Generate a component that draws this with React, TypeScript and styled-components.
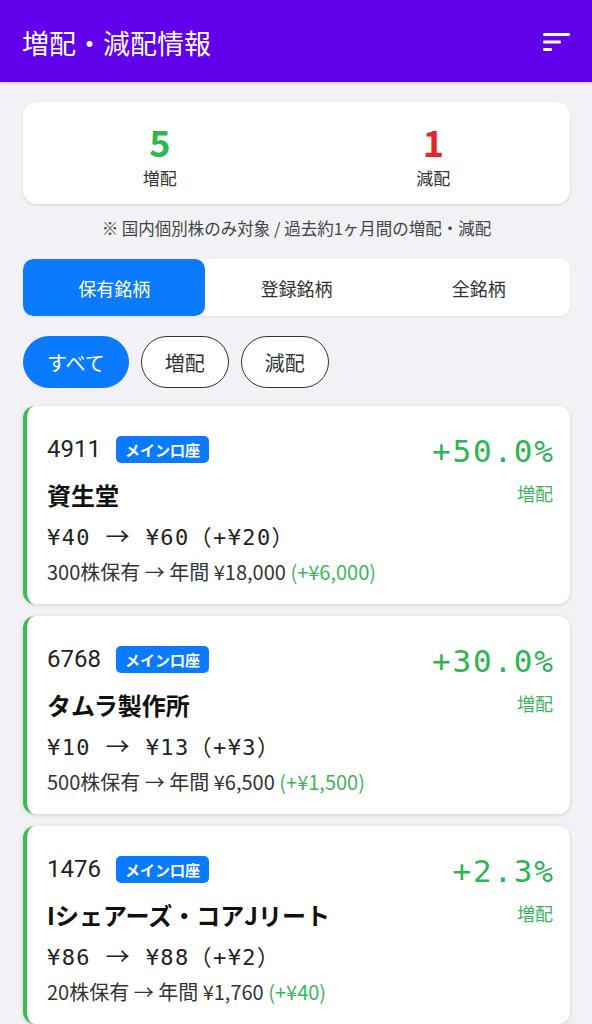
import React from "react";
import styled, { createGlobalStyle } from "styled-components";

const CJK = `"Noto Sans CJK JP", "Noto Sans", sans-serif`;
const MONO = `"DejaVu Sans Mono", "Noto Sans CJK JP", monospace`;
const LATIN = `Roboto, "Noto Sans CJK JP", sans-serif`;

const GlobalStyle = createGlobalStyle`
  html, body { margin: 0; padding: 0; }
  body {
    background: #f2f2f6;
    font-family: ${CJK};
    color: #222;
  }
  * { box-sizing: border-box; }
`;

const Page = styled.div`
  width: 592px;
  min-height: 1024px;
  background: #f2f2f6;
  overflow: hidden;
`;

const Header = styled.header`
  height: 82px;
  background: #6100ea;
  display: flex;
  align-items: center;
  justify-content: space-between;
  padding: 0 20px 0 22px;
  box-shadow: 0 1px 3px rgba(0, 0, 0, 0.2);
`;

const Title = styled.h1`
  margin: 0;
  color: #fff;
  font-size: 27px;
  font-weight: 400;
  line-height: 36px;
  padding-top: 4px;
`;

const IconButton = styled.div`
  width: 30px;
  height: 30px;
  display: flex;
  align-items: center;
  justify-content: center;
  padding-top: 4px;
`;

const Content = styled.main`
  padding: 20px 22px 0 23px;
  display: flex;
  flex-direction: column;
`;

const SummaryCard = styled.section`
  background: #fff;
  border-radius: 14px;
  height: 102px;
  display: grid;
  grid-template-columns: 1fr 1fr;
  box-shadow: 0 1px 3px rgba(0, 0, 0, 0.12);
`;

const Stat = styled.div`
  display: flex;
  flex-direction: column;
  align-items: center;
  justify-content: center;
  padding-top: 4px;
`;

const StatNumber = styled.div<{ $color: string }>`
  font-size: 36px;
  font-weight: 700;
  line-height: 40px;
  color: ${(p) => p.$color};
`;

const StatLabel = styled.div`
  font-size: 17px;
  color: #333;
  line-height: 22px;
  margin-top: 6px;
`;

const Note = styled.p`
  margin: 14px 0 0;
  text-align: center;
  font-size: 16.5px;
  color: #444;
  line-height: 20px;
`;

const Tabs = styled.div`
  margin-top: 21px;
  height: 57px;
  background: #fff;
  border-radius: 10px;
  display: grid;
  grid-template-columns: repeat(3, 1fr);
  box-shadow: 0 1px 2px rgba(0, 0, 0, 0.08);
  overflow: hidden;
`;

const Tab = styled.div<{ $active?: boolean }>`
  display: flex;
  align-items: center;
  justify-content: center;
  font-size: 18px;
  color: ${(p) => (p.$active ? "#fff" : "#333")};
  background: ${(p) => (p.$active ? "#0a7bff" : "transparent")};
  border-radius: 10px;
`;

const Chips = styled.div`
  margin-top: 20px;
  display: flex;
  gap: 12px;
`;

const Chip = styled.div<{ $active?: boolean }>`
  height: 52px;
  padding: 0 23px;
  border-radius: 26px;
  display: flex;
  align-items: center;
  font-size: 20px;
  color: ${(p) => (p.$active ? "#fff" : "#333")};
  background: ${(p) => (p.$active ? "#0a7bff" : "#fff")};
  border: 1.5px solid ${(p) => (p.$active ? "#0a7bff" : "#333")};
`;

const List = styled.div`
  margin-top: 18px;
  display: flex;
  flex-direction: column;
  gap: 12px;
`;

const Card = styled.article<{ $accent: string }>`
  background: #fff;
  border-radius: 12px;
  border-left: 4px solid ${(p) => p.$accent};
  height: 198px;
  padding: 27px 17px 0 20px;
  display: flex;
  justify-content: space-between;
  box-shadow: 0 1px 4px rgba(0, 0, 0, 0.14);
`;

const Left = styled.div`
  display: flex;
  flex-direction: column;
`;

const CodeRow = styled.div`
  display: flex;
  align-items: center;
  gap: 15px;
  height: 32px;
`;

const Code = styled.span`
  font-family: ${LATIN};
  font-size: 24px;
  color: #222;
`;

const Badge = styled.span`
  background: #0a7bff;
  color: #fff;
  font-size: 15px;
  font-weight: 700;
  height: 27px;
  padding: 0 9px;
  border-radius: 5px;
  display: flex;
  align-items: center;
`;

const Name = styled.div`
  font-size: 24px;
  font-weight: 700;
  color: #111;
  line-height: 30px;
  margin-top: 15px;
`;

const Price = styled.div`
  font-family: ${MONO};
  font-size: 22px;
  letter-spacing: 1.4px;
  color: #222;
  line-height: 28px;
  margin-top: 11px;
  white-space: pre;
`;

const Arrow = styled.span`
  font-family: ${CJK};
  font-size: 24px;
`;

const Holding = styled.div`
  font-size: 20px;
  color: #333;
  line-height: 24px;
  margin-top: 8px;
  white-space: nowrap;
`;

const Gain = styled.span`
  color: #3cb55a;
`;

const Right = styled.div`
  display: flex;
  flex-direction: column;
  align-items: flex-end;
`;

const Percent = styled.div<{ $color: string }>`
  font-family: ${MONO};
  font-size: 31px;
  letter-spacing: 1.8px;
  margin-right: -1.8px;
  color: ${(p) => p.$color};
  line-height: 36px;
`;

const Kind = styled.div<{ $color: string }>`
  font-size: 18px;
  color: ${(p) => p.$color};
  line-height: 24px;
  margin-top: 12px;
`;

const SortIcon = () => (
  <svg width="28" height="20" viewBox="0 0 28 20">
    <rect x="0" y="0" width="27" height="3" rx="1.2" fill="#fff" />
    <rect x="0" y="7.5" width="18" height="3" rx="1.2" fill="#fff" />
    <rect x="0" y="15" width="9" height="3" rx="1.2" fill="#fff" />
  </svg>
);

type Item = {
  code: string;
  name: string;
  pct: string;
  from: string;
  to: string;
  diff: string;
  holding: string;
  gain: string;
};

const items: Item[] = [
  {
    code: "4911",
    name: "資生堂",
    pct: "+50.0%",
    from: "¥40",
    to: "¥60",
    diff: "（+¥20）",
    holding: "300株保有 → 年間 ¥18,000 ",
    gain: "(+¥6,000)",
  },
  {
    code: "6768",
    name: "タムラ製作所",
    pct: "+30.0%",
    from: "¥10",
    to: "¥13",
    diff: "（+¥3）",
    holding: "500株保有 → 年間 ¥6,500 ",
    gain: "(+¥1,500)",
  },
  {
    code: "1476",
    name: "Iシェアーズ・コアJリート",
    pct: "+2.3%",
    from: "¥86",
    to: "¥88",
    diff: "（+¥2）",
    holding: "20株保有 → 年間 ¥1,760 ",
    gain: "(+¥40)",
  },
];

export default function App() {
  return (
    <Page>
      <GlobalStyle />
      <Header>
        <Title>増配・減配情報</Title>
        <IconButton>
          <SortIcon />
        </IconButton>
      </Header>
      <Content>
        <SummaryCard>
          <Stat>
            <StatNumber $color="#2db84d">5</StatNumber>
            <StatLabel>増配</StatLabel>
          </Stat>
          <Stat>
            <StatNumber $color="#e3262b">1</StatNumber>
            <StatLabel>減配</StatLabel>
          </Stat>
        </SummaryCard>
        <Note>※ 国内個別株のみ対象 / 過去約1ヶ月間の増配・減配</Note>
        <Tabs>
          <Tab $active>保有銘柄</Tab>
          <Tab>登録銘柄</Tab>
          <Tab>全銘柄</Tab>
        </Tabs>
        <Chips>
          <Chip $active>すべて</Chip>
          <Chip>増配</Chip>
          <Chip>減配</Chip>
        </Chips>
        <List>
          {items.map((it) => (
            <Card key={it.code} $accent="#3cba54">
              <Left>
                <CodeRow>
                  <Code>{it.code}</Code>
                  <Badge>メイン口座</Badge>
                </CodeRow>
                <Name>{it.name}</Name>
                <Price>
                  {it.from} <Arrow>→</Arrow> {it.to}
                  {it.diff}
                </Price>
                <Holding>
                  {it.holding}
                  <Gain>{it.gain}</Gain>
                </Holding>
              </Left>
              <Right>
                <Percent $color="#2db551">{it.pct}</Percent>
                <Kind $color="#3cb55a">増配</Kind>
              </Right>
            </Card>
          ))}
        </List>
      </Content>
    </Page>
  );
}
